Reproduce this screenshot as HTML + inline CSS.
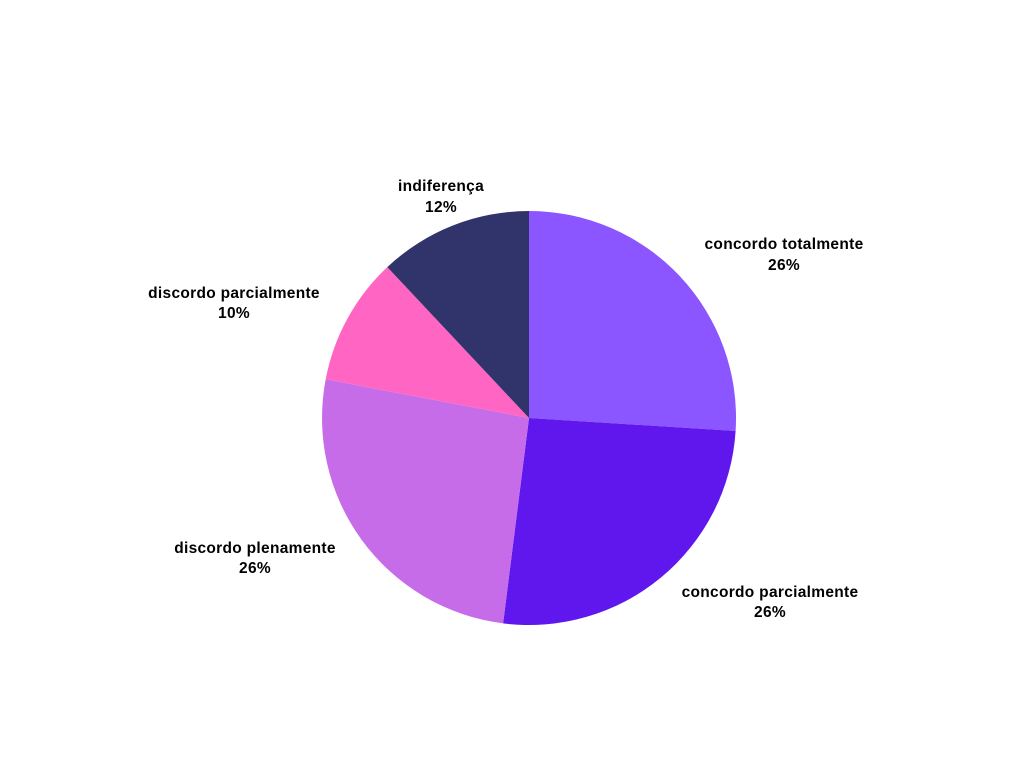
<!DOCTYPE html>
<html><head><meta charset="utf-8"><style>
html,body{margin:0;padding:0;background:#fff;width:1024px;height:768px;overflow:hidden}
svg{display:block}
text{font-family:"Liberation Sans",sans-serif;font-weight:bold;font-size:15.5px;letter-spacing:0.3px;fill:#000;text-anchor:middle}
</style></head><body>
<svg width="1024" height="768" viewBox="0 0 1024 768">
<path d="M529,418 L529,211 A207,207 0 0 1 735.6,431 Z" fill="#8b55ff"/>
<path d="M529,418 L735.6,431 A207,207 0 0 1 503.1,623.4 Z" fill="#5f17ee"/>
<path d="M529,418 L503.1,623.4 A207,207 0 0 1 325.7,379.2 Z" fill="#c76ce8"/>
<path d="M529,418 L325.7,379.2 A207,207 0 0 1 387.3,267.1 Z" fill="#ff66c4"/>
<path d="M529,418 L387.3,267.1 A207,207 0 0 1 529,211 Z" fill="#31336b"/>
<text x="441" y="191">indiferença</text><text x="441" y="212">12%</text>
<text x="784" y="249">concordo totalmente</text><text x="784" y="270">26%</text>
<text x="234" y="298">discordo parcialmente</text><text x="234" y="318">10%</text>
<text x="255" y="553">discordo plenamente</text><text x="255" y="573">26%</text>
<text x="770" y="597">concordo parcialmente</text><text x="770" y="617">26%</text>
</svg>
</body></html>
